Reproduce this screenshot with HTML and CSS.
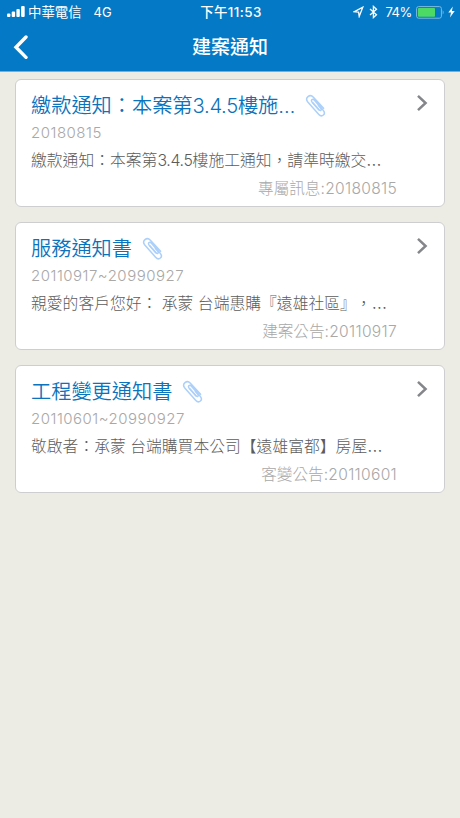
FILE: index.html
```html
<!DOCTYPE html>
<html lang="zh-Hant">
<head>
<meta charset="UTF-8" />
<meta name="viewport" content="width=device-width, initial-scale=1" />
<title>建案通知</title>
<link rel="stylesheet" href="styles.css">
</head>
<body>
  <svg class="sprite" aria-hidden="true">
    <symbol id="clip" viewBox="0 0 22 24">
      <path d="M13.8 15.8 L7.2 8.2 C5.4 6 7.6 4.2 9.4 6.2 L18.2 16.2 C21.4 20 17 24 13.6 20.2 L2.8 8 C-0.6 3.8 4.8 -0.6 8.4 3.2 L18.6 14.2" />
      <path d="M7.8 8.8 L14 15.8 C15.5 17.3 17.2 15.8 15.8 14.2 L13.4 11.4" />
    </symbol>
    <symbol id="arrow" viewBox="0 0 12 18">
      <path d="M2 1.8 L9.6 9 L2 16.2" />
    </symbol>
  </svg>

  <header class="header">
    <div class="status">
      <div class="status-left">
        <svg class="signal" width="19" height="12" viewBox="0 0 19 12">
          <rect x="0" y="7.5" width="3.4" height="3.5" rx="1" />
          <rect x="4.7" y="5.5" width="3.4" height="5.5" rx="1" />
          <rect x="9.4" y="3" width="3.4" height="8" rx="1" />
          <rect x="14.1" y="0" width="3.6" height="11" rx="1" />
        </svg>
        <span class="carrier">中華電信</span>
        <span class="network">4G</span>
      </div>
      <div class="status-time">下午11:53</div>
      <div class="status-right">
        <svg class="location" width="11" height="12" viewBox="0 0 11 12">
          <path d="M1 5.8 L9.8 1.2 L6.2 10.4 L5.6 6.2 Z" />
        </svg>
        <svg class="bluetooth" width="9" height="14" viewBox="0 0 9 14">
          <path d="M1 4 L7.5 9.8 L4.4 12.6 V1.4 L7.5 4.2 L1 10" />
        </svg>
        <span class="percent">74%</span>
        <svg class="battery" width="29" height="13" viewBox="0 0 29 13">
          <rect class="battery-frame" x="0.6" y="0.6" width="24.8" height="11.6" rx="2" />
          <rect class="battery-level" x="2" y="2" width="17" height="8.8" rx="0.8" />
          <path class="battery-cap" d="M26.7 4.3 Q28.6 6.4 26.7 8.5 Z" />
        </svg>
        <svg class="bolt" width="7" height="12" viewBox="0 0 7 12">
          <path d="M4.8 0.5 L0.3 6.6 H3 L2 11.5 L6.7 5 H3.9 Z" />
        </svg>
      </div>
    </div>
    <nav class="navbar">
      <svg class="back" width="16" height="24" viewBox="0 0 16 24">
        <path d="M13 2 L3 12.2 L13 22.4" />
      </svg>
      <h1>建案通知</h1>
    </nav>
  </header>

  <main class="list">
    <article class="card">
      <div class="card-head">
        <h2>繳款通知：本案第<span class="num">3.4.5</span>樓施…</h2>
        <svg class="clip"><use href="#clip" /></svg>
        <svg class="arrow"><use href="#arrow" /></svg>
      </div>
      <p class="date">20180815</p>
      <p class="text">繳款通知：本案第<span class="num">3.4.5</span>樓施工通知，請準時繳交<span class="more">…</span></p>
      <p class="source">專屬訊息<span class="stamp">:20180815</span></p>
    </article>

    <article class="card">
      <div class="card-head">
        <h2>服務通知書</h2>
        <svg class="clip"><use href="#clip" /></svg>
        <svg class="arrow"><use href="#arrow" /></svg>
      </div>
      <p class="date">20110917~20990927</p>
      <p class="text">親愛的客戶您好： 承蒙 台端惠購『遠雄社區』，<span class="more">…</span></p>
      <p class="source">建案公告<span class="stamp">:20110917</span></p>
    </article>

    <article class="card">
      <div class="card-head">
        <h2>工程變更通知書</h2>
        <svg class="clip"><use href="#clip" /></svg>
        <svg class="arrow"><use href="#arrow" /></svg>
      </div>
      <p class="date">20110601~20990927</p>
      <p class="text">敬啟者：承蒙 台端購買本公司【遠雄富都】房屋<span class="more">…</span></p>
      <p class="source">客變公告<span class="stamp">:20110601</span></p>
    </article>
  </main>
</body>
</html>
```
FILE: styles.css
```css
* {
  box-sizing: border-box;
}

body {
  margin: 0;
  min-height: 100vh;
  background: #edece4;
  font-family: Inter, "Noto Sans CJK TC", sans-serif;
  text-spacing-trim: space-all;
  overflow: hidden;
}

h1, h2, p {
  margin: 0;
  font-weight: 400;
  white-space: nowrap;
}

svg {
  display: block;
  flex-shrink: 0;
}

.sprite {
  display: none;
}

/* Header */
.header {
  height: 72px;
  background: #0479c5;
  border-bottom: 1px solid #75b0d5;
  color: #fff;
}

.status {
  display: grid;
  grid-template-columns: 1fr auto 1fr;
  align-items: center;
  height: 24px;
  padding: 0 5px 0 7px;
  font-size: 13px;
  line-height: 24px;
}

.status-left,
.status-right {
  display: flex;
  align-items: center;
}

.status-right {
  justify-content: flex-end;
}

.signal {
  fill: #fff;
}

.carrier {
  margin-left: 2px;
  font-size: 13.4px;
}

.network {
  margin-left: 12px;
}

.status-time {
  font-weight: 500;
  font-size: 13.4px;
  letter-spacing: 0.4px;
}

.location,
.bluetooth {
  fill: none;
  stroke: #fff;
  stroke-width: 1.3;
}

.bluetooth {
  margin-left: 5px;
}

.percent {
  margin-left: 7px;
  letter-spacing: -0.4px;
}

.battery {
  margin-left: 4px;
}

.battery-frame {
  fill: none;
  stroke: #7cbbe2;
}

.battery-level {
  fill: #4cd964;
}

.battery-cap {
  fill: #7cbbe2;
}

.bolt {
  margin-left: 3px;
  fill: #fff;
}

.navbar {
  display: grid;
  grid-template-columns: 40px 1fr 40px;
  align-items: center;
  height: 46px;
  padding-left: 13px;
  padding-right: 13px;
}

.navbar h1 {
  padding-top: 2px;
  font-size: 19px;
  font-weight: 500;
  line-height: 28px;
  text-align: center;
}

.back {
  fill: none;
  stroke: #fff;
  stroke-width: 3.4;
  stroke-linecap: round;
}

/* Notice list */
.list {
  display: flex;
  flex-direction: column;
  gap: 15px;
  padding: 7px 15px 0;
}

.card {
  height: 128px;
  padding: 10px 16px 0 15px;
  background: #fff;
  border: 1px solid #ceced0;
  border-radius: 6px;
}

.card-head {
  display: flex;
  align-items: center;
  height: 32px;
}

.card h2 {
  color: #0b73bc;
  font-size: 20.2px;
  font-weight: 350;
  line-height: 32px;
}

.clip {
  width: 22px;
  height: 24px;
  margin-left: 10px;
  fill: none;
  stroke: #acd0fa;
  stroke-width: 1.5;
  stroke-linecap: round;
}

.arrow {
  width: 12px;
  height: 18px;
  margin: -6px 0 0 auto;
  fill: none;
  stroke: #85868a;
  stroke-width: 2.5;
}

.date {
  color: #a8a8a8;
  font-size: 15px;
  font-weight: 300;
  line-height: 22px;
  letter-spacing: 0.5px;
}

.text {
  padding-top: 2px;
  color: #5c5c5c;
  font-size: 15.8px;
  font-weight: 300;
  line-height: 30px;
}

.source {
  padding-right: 31px;
  color: #a8a8a8;
  font-size: 15.6px;
  font-weight: 300;
  line-height: 26px;
  text-align: right;
}

.num {
  letter-spacing: -0.3px;
}

.stamp {
  letter-spacing: 0.3px;
}

.more {
  font-size: 18px;
  line-height: 1;
}
```
